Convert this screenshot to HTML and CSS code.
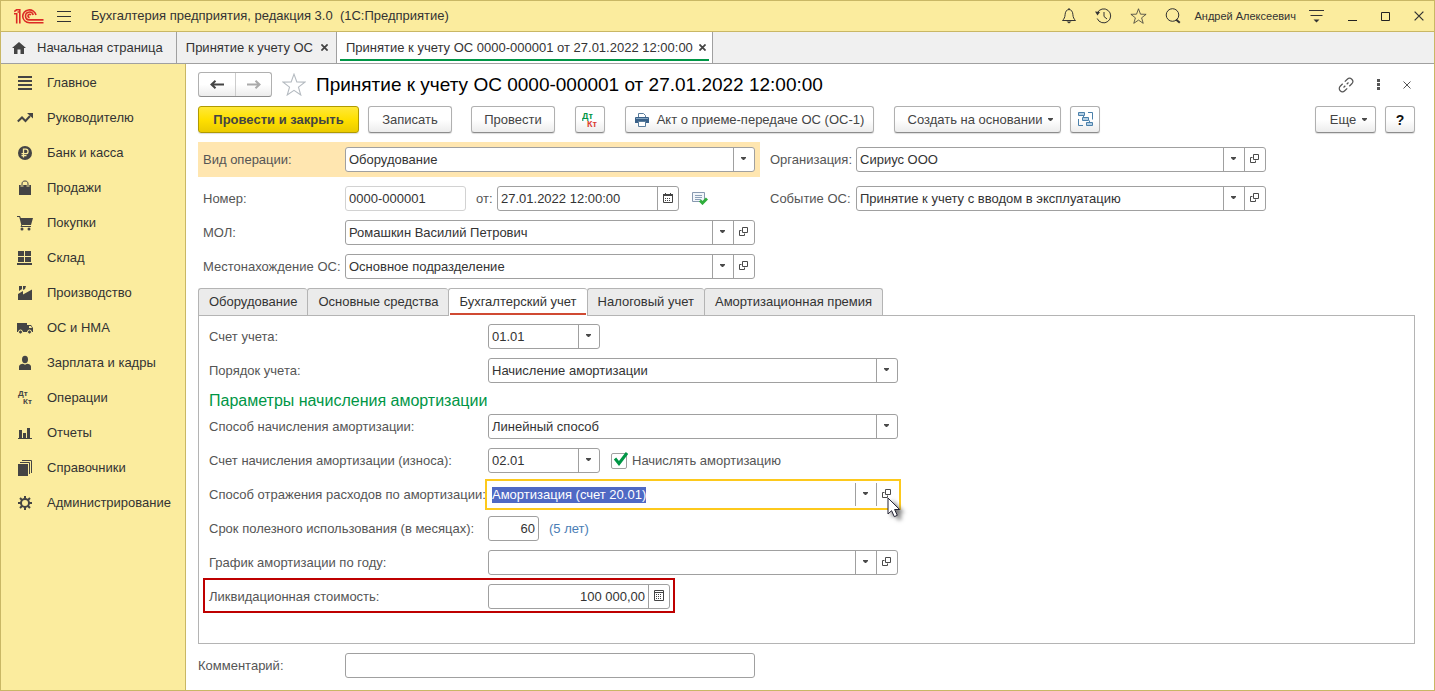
FILE: index.html
```html
<!DOCTYPE html>
<html lang="ru">
<head>
<meta charset="utf-8">
<meta name="viewport" content="width=device-width, initial-scale=1">
<title>Принятие к учету ОС 0000-000001 от 27.01.2022 12:00:00</title>
<link rel="stylesheet" href="styles.css">
</head>
<body>
<svg class="sprite" aria-hidden="true">
  <symbol id="caret" viewBox="0 0 5 3"><path d="M0 0h5v1L3 3H2L0 1z" fill="#4a4a4a"/></symbol>
  <symbol id="open" viewBox="0 0 9 9"><path d="M3.500.5h5v5h-5zM2.500 3.500h-2v5h5v-2" fill="none" stroke="#4a4a4a"/></symbol>
  <symbol id="star" viewBox="0 0 22 21"><path d="M11 1l2.600 7.100 7.400.2-5.900 4.600 2.100 7.200-6.200-4.200-6.200 4.200 2.100-7.200L1 8.300l7.400-.2z" fill="none" stroke="currentColor" stroke-linejoin="miter"/></symbol>
  <symbol id="close" viewBox="0 0 8 8"><path d="M.5.5l7 7M7.500.5l-7 7" stroke="currentColor" fill="none"/></symbol>
</svg>

<div class="app">
  <header class="titlebar">
    <svg class="logo" width="30" height="15" viewBox="0 0 30 15" role="img" aria-label="1С"><g fill="none" stroke="#dc2a25" stroke-width="1.600"><path d="M0 4.800h2.700V14.500M.2 2.600L2.600.8h3.200v13.700M3.500 3h2"/><path d="M22 6A6.700 6.400 0 1 0 15.500 13.700H29.500"/><path d="M19.200 6A3.900 3.900 0 1 0 15.500 10.900H29.500"/><path d="M16.800 6.200a1.500 1.500 0 1 0-1.200 2.200"/></g></svg>
    <button class="plain" aria-label="Меню"><svg width="14" height="11" viewBox="0 0 14 11"><path d="M0 .5h14M0 5.500h14M0 10.500h14" stroke="#333"/></svg></button>
    <span class="app-name">Бухгалтерия предприятия, редакция 3.0&nbsp; (1С:Предприятие)</span>
    <div class="titlebar-tools">
      <button class="plain" aria-label="Уведомления"><svg width="16" height="16" viewBox="0 0 16 16"><path d="M8 1.500c-2.800.3-3.700 2.400-3.900 5.200-.2 2.600-1 4.300-2.600 5.800h13c-1.600-1.500-2.400-3.200-2.600-5.800C11.700 3.900 10.800 1.800 8 1.500zM8 0v2" fill="none" stroke="#333"/><path d="M5.500 13.500h5L8 15.500z" fill="#333"/></svg></button>
      <button class="plain" aria-label="История"><svg width="17" height="16" viewBox="0 0 17 16"><path d="M2.300 5A7 7 0 1 1 2.200 10.500M9 4v4.500l3 2.500" fill="none" stroke="#333"/><path d="M0 3.500l5 .5-2.500 3.500z" fill="#333"/></svg></button>
      <button class="plain" aria-label="Избранное"><svg class="dark" width="17" height="16"><use href="#star"/></svg></button>
      <button class="plain" aria-label="Поиск"><svg width="16" height="16" viewBox="0 0 16 16"><circle cx="7.500" cy="7" r="6.300" fill="none" stroke="#333"/><path d="M11 11.500l3.800 3.200" stroke="#333" stroke-width="2"/></svg></button>
      <a class="user" href="#">Андрей Алексеевич</a>
      <button class="plain" aria-label="Настройки"><svg width="15" height="13" viewBox="0 0 15 13"><path d="M0 .5h15M1.500 5.500h12" stroke="#333"/><path d="M4.500 9.500h6l-3 3z" fill="#333"/></svg></button>
      <button class="plain" aria-label="Свернуть"><svg width="9" height="9" viewBox="0 0 9 9"><path d="M0 8.500h9" stroke="#222"/></svg></button>
      <button class="plain" aria-label="Развернуть"><svg width="9" height="9" viewBox="0 0 9 9"><path d="M.5.5h8v8h-8z" fill="none" stroke="#222"/></svg></button>
      <button class="plain" aria-label="Закрыть"><svg class="dark" width="10" height="10"><use href="#close"/></svg></button>
    </div>
  </header>

  <nav class="window-tabs" aria-label="Открытые окна">
    <a class="window-tab home" href="#"><svg width="14" height="12" viewBox="0 0 14 12"><path d="M7 0l7 6h-2v6H8.500V7.500h-3V12H2V6H0z" fill="#444"/></svg>Начальная страница</a>
    <div class="window-tab"><a href="#">Принятие к учету ОС</a><button class="plain tab-close" aria-label="Закрыть вкладку"><svg width="7" height="7"><use href="#close"/></svg></button></div>
    <div class="window-tab current"><a href="#" aria-current="page">Принятие к учету ОС 0000-000001 от 27.01.2022 12:00:00</a><button class="plain tab-close" aria-label="Закрыть вкладку"><svg width="7" height="7"><use href="#close"/></svg></button></div>
  </nav>

  <div class="workspace">
    <nav class="sidebar" aria-label="Разделы">
      <a href="#"><svg viewBox="0 0 16 16"><path d="M1 2h14M1 6h14M1 10h14M1 14h14" stroke="#444" stroke-width="2"/></svg>Главное</a>
      <a href="#"><svg viewBox="0 0 16 16"><path d="M.8 11.500l4.200-4 3.500 3.500 4.500-5" fill="none" stroke="#444" stroke-width="2"/><path d="M10 3h6v5.500z" fill="#444"/></svg>Руководителю</a>
      <a href="#"><svg viewBox="0 0 16 16"><circle cx="8" cy="8" r="7" fill="#444"/><path d="M6.500 12.500V4.200h2.300a2.200 2.200 0 0 1 0 4.500H4.500M4.500 10.700h5" fill="none" stroke="#fbec9e" stroke-width="1.300"/></svg>Банк и касса</a>
      <a href="#"><svg viewBox="0 0 16 16"><path d="M2 5h12v10H2z" fill="#444"/><path d="M5 7V4.500C5 2.500 6 1.500 8 1.500s3 1 3 3V7" fill="none" stroke="#fbec9e" stroke-width="2.500"/><path d="M5 7V4c0-2 1-3 3-3s3 1 3 3v3" fill="none" stroke="#444"/></svg>Продажи</a>
      <a href="#"><svg viewBox="0 0 16 16"><path d="M0 1h3l.8 2H16l-2 7H5.200l-.4 1H14v1H3.500l.8-2L2.300 2H0z" fill="#444"/><circle cx="5" cy="14" r="1.500" fill="#444"/><circle cx="12" cy="14" r="1.500" fill="#444"/></svg>Покупки</a>
      <a href="#"><svg viewBox="0 0 16 16"><path d="M1 1h6v5H1zM8 1h6v5H8zM1 7h6v5H1zM8 7h6v5H8zM0 13h15v2H0z" fill="#444"/></svg>Склад</a>
      <a href="#"><svg viewBox="0 0 16 16"><path d="M1 15V9l5-3v3.500L15 4.500V15zM2 1h3v3L2 6zM6 1h3L8 4 6 5z" fill="#444"/></svg>Производство</a>
      <a href="#"><svg viewBox="0 0 16 16"><path d="M0 3h10v9H0zM11 5h3l2 3v4h-6V5z" fill="#444"/><path d="M12 6h2l1 2h-3z" fill="#fbec9e"/><circle cx="3.500" cy="12" r="2" fill="#444" stroke="#fbec9e"/><circle cx="12.500" cy="12" r="2" fill="#444" stroke="#fbec9e"/></svg>ОС и НМА</a>
      <a href="#"><svg viewBox="0 0 16 16"><ellipse cx="8" cy="4.500" rx="3" ry="3.700" fill="#444"/><path d="M2 15v-3.500C2 10 4 9 6 8.800l2 1 2-1c2 .2 4 1.200 4 2.700V15z" fill="#444"/></svg>Зарплата и кадры</a>
      <a href="#"><svg viewBox="0 0 16 16" class="dtkt"><text x="1" y="6" fill="#444">Дт</text><text x="6" y="14" fill="#444">Кт</text></svg>Операции</a>
      <a href="#"><svg viewBox="0 0 16 16"><path d="M1 13h14v1H1zM2 5h3v9H2zM6 8h3v6H6zM10 3h3v11h-3z" fill="#444"/></svg>Отчеты</a>
      <a href="#"><svg viewBox="0 0 16 16"><path d="M1 4h10v12H1z" fill="#444"/><path d="M3 2.500h9.500V14M5 .5h9.500V13" fill="none" stroke="#444"/></svg>Справочники</a>
      <a href="#"><svg viewBox="0 0 16 16"><circle cx="8" cy="8" r="4" fill="none" stroke="#444" stroke-width="2"/><path d="M8 1v3M8 12v3M1 8h3M12 8h3M3 3l2 2M11 11l2 2M3 13l2-2M11 5l2-2" stroke="#444" stroke-width="2"/></svg>Администрирование</a>
    </nav>

    <main class="document">
      <div class="doc-head">
        <div class="history">
          <button aria-label="Назад"><svg width="14" height="9" viewBox="0 0 14 9"><path d="M14 4.500H3M5.500.8L1.500 4.500l4 3.700" fill="none" stroke="#444" stroke-width="2"/></svg></button>
          <button aria-label="Вперед"><svg width="14" height="9" viewBox="0 0 14 9"><path d="M0 4.500h11M8.500.8l4 3.700-4 3.700" fill="none" stroke="#aaa" stroke-width="2"/></svg></button>
        </div>
        <button class="plain favourite" aria-label="В избранное"><svg width="24" height="23"><use href="#star"/></svg></button>
        <h1>Принятие к учету ОС 0000-000001 от 27.01.2022 12:00:00</h1>
        <div class="doc-tools">
          <button class="plain" aria-label="Ссылка"><svg width="16" height="16" viewBox="0 0 16 16"><g transform="rotate(-45 8 8)" fill="none" stroke="#555" stroke-width="1.200"><path d="M6.500 4.800H3A3.200 3.200 0 0 0 3 11.200h3.500M9.500 4.800H13A3.200 3.200 0 0 1 13 11.200H9.500M4.500 8h2.500M9 8h2.500"/></g></svg></button>
          <button class="plain" aria-label="Дополнительно"><svg width="3" height="11" viewBox="0 0 3 11"><path d="M0 0h3v3H0zM0 4h3v3H0zM0 8h3v3H0z" fill="#555"/></svg></button>
          <button class="plain" aria-label="Закрыть документ"><svg width="8" height="8"><use href="#close"/></svg></button>
        </div>
      </div>

      <div class="toolbar">
        <button class="btn primary">Провести и закрыть</button>
        <button class="btn save">Записать</button>
        <button class="btn post">Провести</button>
        <button class="btn icon spaced" aria-label="Дт Кт"><svg class="dtkt colored" width="17" height="16" viewBox="0 0 17 16"><text x="0" y="7" fill="#009646">Дт</text><text x="5" y="15" fill="#dc3c32">Кт</text></svg></button>
        <button class="btn print spaced"><svg width="14" height="14" viewBox="0 0 14 14"><path d="M3.500 4V.5h5l2 2V4" fill="#fff" stroke="#5a7d9c"/><path d="M0 5q0-1 1-1h12q1 0 1 1v5H0z" fill="#3a6189"/><path d="M1 5.500h12" stroke="#86a6c2"/><path d="M3.500 8.500h7v5h-7z" fill="#fff" stroke="#5a7d9c"/></svg>Акт о приеме-передаче ОС (ОС-1)</button>
        <button class="btn create spaced">Создать на основании<svg width="5" height="3"><use href="#caret"/></svg></button>
        <button class="btn icon" aria-label="Структура подчиненности"><svg width="15" height="15" viewBox="0 0 15 15"><path d="M.5.500h6v3h-6zM4.500 5.500h6v3h-6zM8.500 10.500h6v3h-6z" fill="#b3cfe5" stroke="#4b80aa"/><path d="M10 .5h4.500v7M.5 7v6.500H5M11.500 8.500v2M5.500 3.500v2" fill="none" stroke="#4b80aa"/></svg></button>
        <button class="btn more">Еще<svg width="5" height="3"><use href="#caret"/></svg></button>
        <button class="btn icon help">?</button>
      </div>

      <div class="header-fields">
        <div class="header-column">
          <div class="row highlighted">
            <label for="operation">Вид операции:</label>
            <div class="field long"><select id="operation"><option>Оборудование</option></select><span class="part"><svg width="5" height="3"><use href="#caret"/></svg></span></div>
          </div>
          <div class="row">
            <label for="number">Номер:</label>
            <div class="field number"><input id="number" value="0000-000001" readonly></div>
            <label class="from" for="date">от:</label>
            <div class="field date"><input id="date" value="27.01.2022 12:00:00"><button class="part" aria-label="Выбрать дату"><svg width="10" height="10" viewBox="0 0 10 10"><path d="M.5 1.500h9v8h-9z" fill="none" stroke="#444"/><path d="M0 1h10v2H0zM2 0h1v2H2zM7 0h1v2H7z" fill="#444"/><path d="M2 5.500h6M2 7.500h6" stroke="#444" stroke-dasharray="1 1"/></svg></button></div>
            <svg class="posted" width="16" height="13" viewBox="0 0 16 13" role="img" aria-label="Проведен"><path d="M.5.5h12v9H.500z" fill="#f2f6fa" stroke="#8899b0"/><path d="M3 3.500h7M3 5.500h7M3 7.500h6" stroke="#8ca0b8"/><path d="M8 8.500l2.500 2.500 4.500-4.500" fill="none" stroke="#2fae3c" stroke-width="3"/></svg>
          </div>
          <div class="row">
            <label for="person">МОЛ:</label>
            <div class="field long"><input id="person" value="Ромашкин Василий Петрович"><button class="part" aria-label="Выбрать"><svg width="5" height="3"><use href="#caret"/></svg></button><button class="part" aria-label="Открыть"><svg width="9" height="9"><use href="#open"/></svg></button></div>
          </div>
          <div class="row">
            <label for="place">Местонахождение ОС:</label>
            <div class="field long"><input id="place" value="Основное подразделение"><button class="part" aria-label="Выбрать"><svg width="5" height="3"><use href="#caret"/></svg></button><button class="part" aria-label="Открыть"><svg width="9" height="9"><use href="#open"/></svg></button></div>
          </div>
        </div>
        <div class="header-column second">
          <div class="row first">
            <label for="company">Организация:</label>
            <div class="field long"><input id="company" value="Сириус ООО"><button class="part" aria-label="Выбрать"><svg width="5" height="3"><use href="#caret"/></svg></button><button class="part" aria-label="Открыть"><svg width="9" height="9"><use href="#open"/></svg></button></div>
          </div>
          <div class="row">
            <label for="event">Событие ОС:</label>
            <div class="field long"><input id="event" value="Принятие к учету с вводом в эксплуатацию"><button class="part" aria-label="Выбрать"><svg width="5" height="3"><use href="#caret"/></svg></button><button class="part" aria-label="Открыть"><svg width="9" height="9"><use href="#open"/></svg></button></div>
          </div>
        </div>
      </div>

      <div class="page-tabs" role="tablist">
        <button role="tab">Оборудование</button>
        <button role="tab">Основные средства</button>
        <button role="tab" aria-selected="true">Бухгалтерский учет</button>
        <button role="tab">Налоговый учет</button>
        <button role="tab">Амортизационная премия</button>
      </div>

      <section class="panel" role="tabpanel">
        <div class="row">
          <label for="account">Счет учета:</label>
          <div class="field code"><input id="account" value="01.01"><button class="part" aria-label="Выбрать"><svg width="5" height="3"><use href="#caret"/></svg></button></div>
        </div>
        <div class="row">
          <label for="order">Порядок учета:</label>
          <div class="field long"><select id="order"><option>Начисление амортизации</option></select><span class="part"><svg width="5" height="3"><use href="#caret"/></svg></span></div>
        </div>
        <h2>Параметры начисления амортизации</h2>
        <div class="row">
          <label for="method">Способ начисления амортизации:</label>
          <div class="field long"><select id="method"><option>Линейный способ</option></select><span class="part"><svg width="5" height="3"><use href="#caret"/></svg></span></div>
        </div>
        <div class="row">
          <label for="wear">Счет начисления амортизации (износа):</label>
          <div class="field code"><input id="wear" value="02.01"><button class="part" aria-label="Выбрать"><svg width="5" height="3"><use href="#caret"/></svg></button></div>
          <label class="check"><input type="checkbox" checked><svg width="16" height="16" viewBox="0 0 16 16"><path d="M3 6.500l4 5L15 1" fill="none" stroke="#009646" stroke-width="3"/></svg>Начислять амортизацию</label>
        </div>
        <div class="row">
          <label for="expense">Способ отражения расходов по амортизации:</label>
          <div class="field long focused"><input id="expense" value="Амортизация (счет 20.01)"><button class="part" aria-label="Выбрать"><svg width="5" height="3"><use href="#caret"/></svg></button><button class="part" aria-label="Открыть"><svg width="9" height="9"><use href="#open"/></svg></button>
            <svg class="pointer" width="18" height="26" viewBox="0 0 18 26" aria-hidden="true"><path d="M1 1v16l3.600-3.300 2.700 6 3-1.400-2.700-5.800h5z" fill="#fff" stroke="#223"/></svg>
          </div>
        </div>
        <div class="row">
          <label for="term">Срок полезного использования (в месяцах):</label>
          <div class="field term"><input id="term" class="amount" value="60"></div>
          <span class="years">(5 лет)</span>
        </div>
        <div class="row">
          <label for="schedule">График амортизации по году:</label>
          <div class="field long"><input id="schedule"><button class="part" aria-label="Выбрать"><svg width="5" height="3"><use href="#caret"/></svg></button><button class="part" aria-label="Открыть"><svg width="9" height="9"><use href="#open"/></svg></button></div>
        </div>
        <div class="row marked">
          <label for="salvage">Ликвидационная стоимость:</label>
          <div class="field money"><input id="salvage" class="amount" value="100 000,00"><button class="part" aria-label="Калькулятор"><svg width="10" height="11" viewBox="0 0 10 11"><path d="M.5.500h9v10h-9zM0 2.500h10" fill="none" stroke="#444"/><path d="M2 4.500h6M2 6.500h6M2 8.500h6" stroke="#444" stroke-dasharray="1 1"/></svg></button></div>
        </div>
      </section>

      <div class="row comment">
        <label for="comment">Комментарий:</label>
        <div class="field long"><input id="comment"></div>
      </div>
    </main>
  </div>
</div>
<script src="script.js"></script>
</body>
</html>
```

FILE: styles.css
```css
* { box-sizing: border-box; }

body {
  margin: 0;
  font: 13px/16px "Liberation Sans", Arial, sans-serif;
  color: #333;
  background: #fff;
}

button, input, select { font: inherit; color: inherit; }
a { color: inherit; text-decoration: none; }
svg { display: block; flex: none; }

.sprite { position: absolute; width: 0; height: 0; }

.app {
  display: flex;
  flex-direction: column;
  min-height: 100vh;
  border: 1px solid #c9b765;
}

.plain {
  display: flex;
  padding: 0;
  border: 0;
  background: none;
  color: #555;
}

.dark { color: #333; }

/* Title bar */
.titlebar {
  display: flex;
  align-items: center;
  height: 31px;
  padding: 0 10px 0 13px;
  background: #fbec9e;
  border-bottom: 1px solid #c9b765;
}
.logo { margin-right: 13px; }
.app-name { margin-left: 20px; }
.titlebar-tools {
  display: flex;
  align-items: center;
  gap: 18px;
  margin-left: auto;
}
.user { font-size: 11px; margin: 0 -5px; }
.titlebar-tools .user ~ .plain { margin-right: 6px; }
.titlebar-tools .plain:last-child { margin-right: 0; }

/* Open windows */
.window-tabs {
  display: flex;
  height: 32px;
  background: #f0f0f0;
  border-bottom: 1px solid #a0a0a0;
}
.window-tab {
  display: flex;
  align-items: center;
  gap: 8px;
  padding: 0 8px 0 9px;
  border-right: 1px solid #a0a0a0;
}
.window-tab.home { gap: 11px; padding: 0 13px 0 11px; }
.window-tab.current {
  position: relative;
  gap: 6px;
  padding-right: 6px;
  background: #fff;
}
.window-tab.current::after {
  content: "";
  position: absolute;
  left: 3px;
  right: 3px;
  bottom: 2px;
  height: 2px;
  background: #009646;
}
.tab-close svg { color: #444; stroke-width: 2; }

.workspace { display: flex; flex: 1; }

/* Sections */
.sidebar {
  flex: none;
  width: 185px;
  padding-top: 1px;
  background: #fbec9e;
  border-right: 1px solid #c9b765;
}
.sidebar a {
  display: flex;
  align-items: center;
  gap: 14px;
  height: 35px;
  padding-left: 16px;
}
.sidebar svg { width: 16px; height: 16px; }
.dtkt text { font: bold 8px "Liberation Sans", Arial, sans-serif; }
.dtkt.colored text { font-size: 9px; }

/* Document */
.document {
  display: flex;
  flex-direction: column;
  flex: 1;
  min-width: 0;
  padding: 8px 19px 12px 12px;
}
.doc-head { display: flex; align-items: center; height: 25px; }
.history {
  display: flex;
  height: 25px;
  border: 1px solid #b0b0b0;
  border-bottom-color: #8c8c8c;
  border-radius: 3px;
  background: linear-gradient(#fff 50%, #ececec);
}
.history button {
  display: flex;
  align-items: center;
  justify-content: center;
  width: 36px;
  padding: 0;
  border: 0;
  background: none;
}
.history button + button { border-left: 1px solid #ccc; }
.favourite { margin: 0 10px; color: #b4bac0; }
h1 { margin: 0; font-size: 19px; line-height: 24px; font-weight: normal; color: #000; }
.doc-tools {
  display: flex;
  align-items: center;
  gap: 23px;
  margin-left: auto;
  padding-right: 4px;
}

.toolbar { display: flex; gap: 9px; margin-top: 9px; }
.btn {
  display: flex;
  align-items: center;
  justify-content: center;
  height: 27px;
  padding: 0;
  border: 1px solid #b0b0b0;
  border-bottom-color: #8c8c8c;
  border-radius: 3px;
  background: linear-gradient(#fff 50%, #ececec);
  box-shadow: 0 1px 1px #ddd;
  color: #444;
  white-space: nowrap;
}
.primary {
  width: 161px;
  font-weight: bold;
  border-color: #b09a00;
  background: linear-gradient(#ffe838, #ffe000 50%, #ebcb00);
}
.save, .post { width: 84px; }
.post { margin-left: 10px; }
.spaced { margin-left: 11px; }
.icon { width: 30px; }
.print { width: 249px; gap: 8px; }
.create { width: 167px; gap: 6px; padding-left: 6px; }
.more { width: 61px; gap: 6px; padding-left: 6px; margin-left: auto; }
.help { font-weight: bold; font-size: 14px; color: #111; }

/* Fields */
.row { display: flex; align-items: center; margin-bottom: 9px; }
.row label { flex: none; color: #555; white-space: nowrap; }
.field {
  display: flex;
  position: relative;
  height: 25px;
  border: 1px solid #a0a0a0;
  border-radius: 3px;
  background: #fff;
}
.field input, .field select {
  flex: 1;
  min-width: 0;
  padding: 0 3px;
  border: 0;
  outline: 0;
  background: none;
  appearance: none;
}
.field .amount { text-align: right; }
.part {
  display: flex;
  flex: none;
  align-items: center;
  justify-content: center;
  width: 21px;
  padding: 0 1px 2px 0;
  border: 0;
  border-left: 1px solid #a0a0a0;
  background: none;
}
.long { width: 410px; }
.number { width: 121px; border-color: #d2d2d2; }
.date { width: 182px; }
.code { width: 112px; }
.term { width: 51px; }
.money { width: 182px; }

.header-fields { display: flex; gap: 10px; margin-top: 9px; }
.header-column .row { padding: 0 5px; }
.header-column .row > label:first-child { width: 142px; }
.header-column .highlighted { padding: 5px; background: #ffe6b0; }
.header-column .from { width: 31px; padding-left: 10px; }
.posted { margin-left: 13px; }
.header-column.second { padding-top: 5px; }
.second .row { padding: 0; }
.second .first { margin-bottom: 14px; }
.header-column.second .row > label:first-child { width: 86px; }

/* Pages */
.page-tabs { display: flex; }
.page-tabs button {
  height: 27px;
  padding: 0 10px;
  border: 1px solid #b4b4b4;
  border-bottom: 0;
  border-right: 0;
  border-radius: 3px 3px 0 0;
  background: #ebebeb;
  white-space: nowrap;
}
.page-tabs button:last-child { border-right: 1px solid #b4b4b4; }
.page-tabs [aria-selected="true"] {
  position: relative;
  margin-bottom: -1px;
  height: 28px;
  padding-bottom: 2px;
  background: #fff;
}
.page-tabs [aria-selected="true"]::after {
  content: "";
  position: absolute;
  left: 1px;
  right: 1px;
  bottom: 1px;
  height: 2px;
  background: #d04a32;
}
.panel {
  flex: 1;
  padding: 8px 10px 25px;
  border: 1px solid #b4b4b4;
}
.panel .row > label:first-child { width: 279px; }
h2 {
  margin: 0 0 4px;
  font-size: 16px;
  line-height: 18px;
  font-weight: normal;
  color: #009646;
}

.row .check { display: flex; position: relative; align-items: center; gap: 5px; margin-left: 11px; }
.check input {
  width: 16px;
  height: 16px;
  margin: 0;
  border: 1px solid #a0a0a0;
  border-radius: 2px;
  appearance: none;
}
.check svg { position: absolute; left: 1px; top: -1px; }

.focused {
  border-color: transparent;
  border-radius: 0;
  outline: 2px solid #fdc91c;
  outline-offset: 1px;
}
.focused input::selection { color: #fff; background: #4f69c4; }
.pointer {
  position: absolute;
  right: -8px;
  top: 14px;
  z-index: 1;
  filter: drop-shadow(4px 3px 2px #777);
}
.years { margin-left: 10px; color: #4a7db5; }

.panel .marked {
  width: fit-content;
  margin: -6px -6px 0;
  padding: 4px 3px 2px 4px;
  border: 2px solid #be0000;
}

.comment { margin: 9px 0 0; }
.comment label { width: 147px; }
```

FILE: script.js
```js
// Open the document with the expense field ready for editing.
const expense = document.getElementById("expense");
expense.focus();
expense.select();
```
